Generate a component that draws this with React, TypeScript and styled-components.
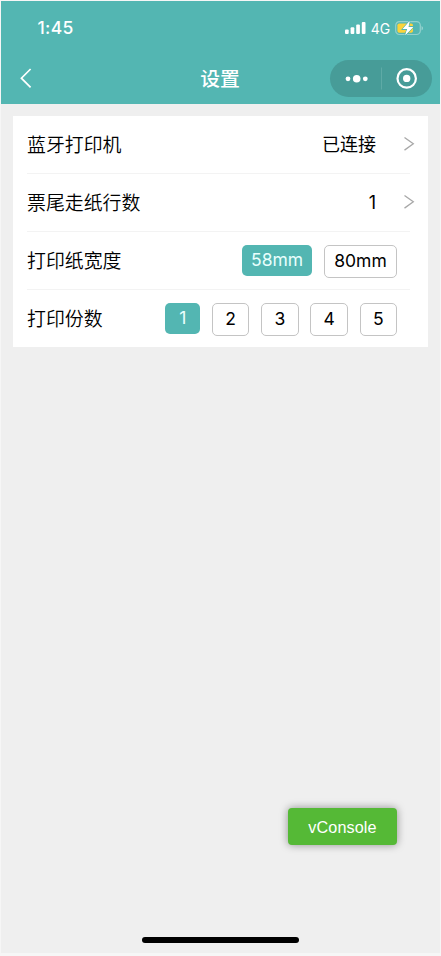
import React from "react";
import styled, { createGlobalStyle } from "styled-components";

const GlobalStyle = createGlobalStyle`
  * { box-sizing: border-box; }
  html, body { margin: 0; padding: 0; background: #f6f6f6; }
  body { font-family: Inter, "Noto Sans CJK SC", sans-serif; color: #000; }
`;

const Screen = styled.main`
  position: relative;
  width: 439px;
  height: 952px;
  margin: 1px 1px 3px;
  background: #efefef;
  display: flex;
  flex-direction: column;
  overflow: hidden;
`;

const Header = styled.header`
  height: 103px;
  background: #53b6b2;
  color: #fff;
  flex: none;
`;

const StatusBar = styled.div`
  height: 51px;
  padding: 3px 17px 0 36.5px;
  display: flex;
  justify-content: space-between;
  align-items: center;
`;

const Clock = styled.span`
  font-size: 17.5px;
  font-weight: 500;
  line-height: 20px;
  letter-spacing: 0.35px;
`;

const StatusIcons = styled.div`
  display: flex;
  align-items: center;
  gap: 5px;
`;

const Network = styled.span`
  padding-top: 1px;
  font-size: 14px;
  line-height: 18px;
  letter-spacing: -0.1px;
`;

const NavBar = styled.nav`
  height: 52px;
  padding: 0 8px 0 18px;
  display: grid;
  grid-template-columns: 102px 1fr 102px;
  align-items: center;
`;

const BackButton = styled.button`
  width: 16px;
  height: 24px;
  padding: 0;
  border: 0;
  background: none;
  display: flex;
`;

const Title = styled.h1`
  margin: 0;
  padding: 2px 11px 0 0;
  font-size: 19.8px;
  font-weight: 500;
  line-height: 28px;
  text-align: center;
`;

const Capsule = styled.div`
  width: 102px;
  height: 37px;
  border-radius: 19px;
  background: #479c98;
  display: flex;
  align-items: center;
`;

const List = styled.section`
  margin: 12px 12px 0;
  width: 415px;
  height: 231px;
  background: #fff;
`;

const Row = styled.div`
  height: 58px;
  margin: 0 18px 0 14px;
  display: flex;
  align-items: center;
  justify-content: space-between;
  border-bottom: 1px solid #f3f3f3;
  &:last-child { height: 57px; border-bottom: 0; }
`;

const Label = styled.span`
  padding-bottom: 2px;
  font-family: "Noto Sans CJK SC", sans-serif;
  font-size: 18.9px;
  font-weight: 350;
  line-height: 28px;
`;

const Value = styled.span`
  margin-right: -5px;
  display: flex;
  align-items: center;
  gap: 27px;
  font-size: 18px;
  line-height: 28px;
  font-weight: 400;
`;

const Options = styled.div`
  height: 33px;
  margin: 2px 13px 0 0;
  display: flex;
  align-items: flex-start;
  gap: 11.7px;
`;

const Option = styled.button<{ $selected?: boolean; $wide?: boolean }>`
  width: ${(p) => (p.$wide ? (p.$selected ? 70.5 : 73) : p.$selected ? 35 : 37.5)}px;
  height: ${(p) => (p.$selected ? 30.5 : 33)}px;
  padding: 0 0 1px;
  border: ${(p) => (p.$selected ? "0" : "1px solid #c4c4c4")};
  border-radius: 5px;
  background: ${(p) => (p.$selected ? "#53b6b2" : "#fff")};
  color: ${(p) => (p.$selected ? "#e9fffd" : "#000")};
  font: 400 17.5px/28px Inter, sans-serif;
  display: flex;
  align-items: center;
  justify-content: center;
`;

const ConsoleButton = styled.button`
  position: absolute;
  right: 43px;
  bottom: 108px;
  width: 109px;
  height: 37px;
  padding: 1px 0 0;
  border: 0;
  border-radius: 4px;
  background: #55b936;
  box-shadow: 0 0 8px rgba(0, 0, 0, 0.4);
  color: #fff;
  font: 400 16.2px/20px "Liberation Sans", sans-serif;
  letter-spacing: 0.1px;
`;

const HomeIndicator = styled.div`
  width: 157px;
  height: 6px;
  margin: auto auto 10px;
  border-radius: 3px;
  background: #000;
`;

const Signal = () => (
  <svg width="21" height="14" viewBox="0 0 21 14" fill="#fff">
    <rect x="0" y="8.5" width="3.7" height="4.5" rx="1" />
    <rect x="5.6" y="6.3" width="3.7" height="6.7" rx="1" />
    <rect x="11.2" y="3.6" width="3.7" height="9.4" rx="1" />
    <rect x="16.8" y="1" width="3.7" height="12" rx="1" />
  </svg>
);

const Battery = () => (
  <svg width="28" height="16" viewBox="0 0 28 16">
    <rect x="0.7" y="1.7" width="24.6" height="12.8" rx="3.7" fill="none" stroke="#93d1ce" strokeWidth="1.2" />
    <path d="M26.5 6v4.4c1.2-.5 1.6-1.2 1.6-2.2s-.4-1.7-1.6-2.2z" fill="#93d1ce" />
    <rect x="2.4" y="3.4" width="15.6" height="9.4" rx="1.8" fill="#fbd33b" />
    <path d="M14.6 1.2 7.8 9.1h4.5L10.3 15l7.8-8.1h-4.8z" fill="#fff" stroke="#53b6b2" strokeWidth="1.6" paintOrder="stroke" />
    <path d="M14.6 1.2 7.8 9.1h4.5L10.3 15l7.8-8.1h-4.8z" fill="#fff" />
  </svg>
);

const Chevron = () => (
  <svg width="12" height="18" viewBox="0 0 12 18" fill="none" stroke="#a8a8a8" strokeWidth="1.3">
    <path d="M1.5 1.5 10.3 7.8 1.5 14.1" />
  </svg>
);

const widths = ["58mm", "80mm"];
const copies = [1, 2, 3, 4, 5];

export default function App() {
  return (
    <>
      <GlobalStyle />
      <Screen>
        <Header>
          <StatusBar>
            <Clock>1:45</Clock>
            <StatusIcons>
              <Signal />
              <Network>4G</Network>
              <Battery />
            </StatusIcons>
          </StatusBar>
          <NavBar>
            <BackButton aria-label="返回">
              <svg width="16" height="24" viewBox="0 0 16 24" fill="none" stroke="#fff" strokeWidth="1.7">
                <path d="M11.6 3 2.4 12.2l9.2 9.2" />
              </svg>
            </BackButton>
            <Title>设置</Title>
            <Capsule>
              <svg width="102" height="37" viewBox="0 0 102 37" fill="#fff">
                <circle cx="18" cy="18.8" r="2.4" />
                <circle cx="26.7" cy="18.8" r="3.8" />
                <circle cx="35.3" cy="18.8" r="2.4" />
                <rect x="51" y="7.5" width="1" height="22" fill="#5eaaa6" />
                <circle cx="76.7" cy="18.4" r="9.2" fill="none" stroke="#fff" strokeWidth="2.2" />
                <circle cx="76.7" cy="18.4" r="3.7" />
              </svg>
            </Capsule>
          </NavBar>
        </Header>
        <List>
          <Row>
            <Label>蓝牙打印机</Label>
            <Value>已连接<Chevron /></Value>
          </Row>
          <Row>
            <Label>票尾走纸行数</Label>
            <Value>1<Chevron /></Value>
          </Row>
          <Row>
            <Label>打印纸宽度</Label>
            <Options>
              {widths.map((w, i) => (
                <Option key={w} $wide $selected={i === 0}>{w}</Option>
              ))}
            </Options>
          </Row>
          <Row>
            <Label>打印份数</Label>
            <Options>
              {copies.map((n) => (
                <Option key={n} $selected={n === 1}>{n}</Option>
              ))}
            </Options>
          </Row>
        </List>
        <ConsoleButton>vConsole</ConsoleButton>
        <HomeIndicator />
      </Screen>
    </>
  );
}
